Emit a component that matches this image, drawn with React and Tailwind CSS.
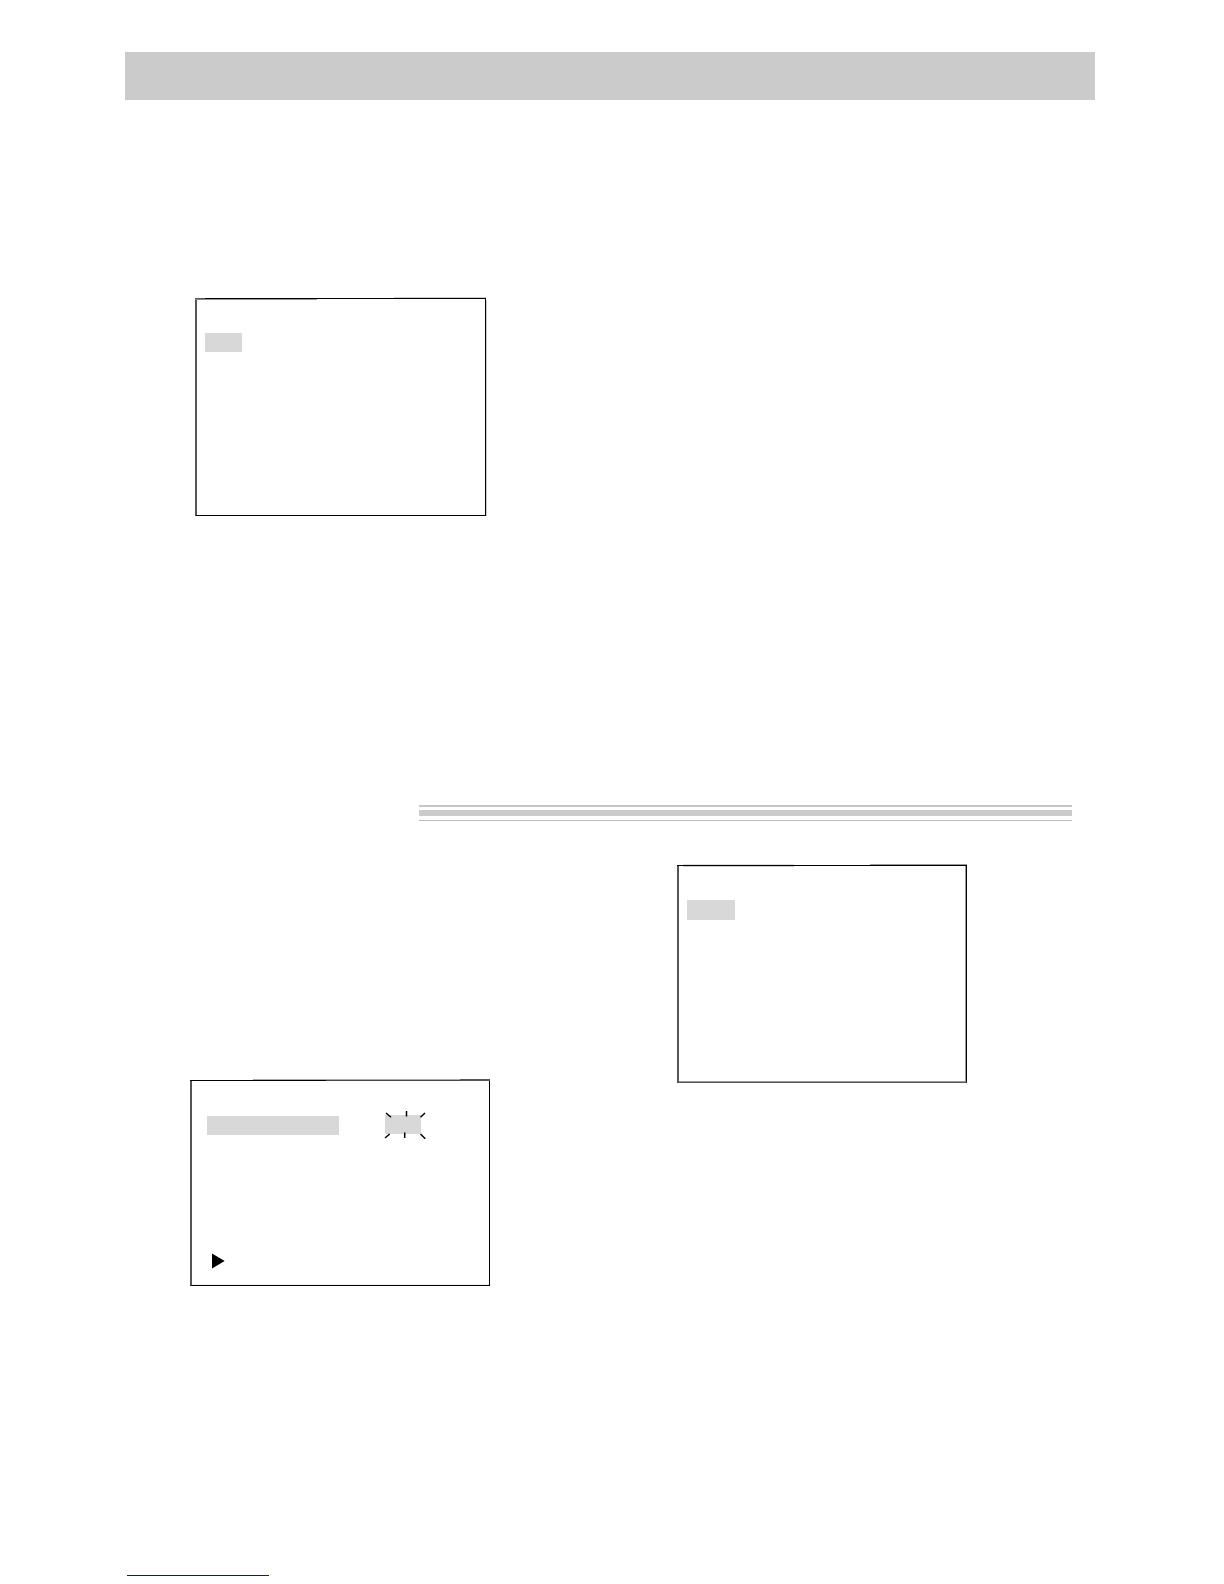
export default function App() {
  return (
    <main className="min-h-screen bg-white px-[125px] pt-[52px] pb-2">

      {/* TITLE BAR */}
      <header className="mr-1 h-12 bg-[#cbcbcb]" />

      {/* FIRST SCREEN */}
      <section className="mt-[197px] pl-[70px]">
        <Screen
          className="max-w-[291px]"
          edge={[
            { width: "w-[10px]", rows: ["bg-white", "bg-[#555555]", "bg-[#888888]"] },
            { width: "w-28", rows: ["bg-white", "bg-black", "bg-[#999999]"] },
            { width: "w-[77px]", rows: ["bg-white", "bg-black", "bg-white"] },
            { width: "flex-1", rows: ["bg-[#d0d0d0]", "bg-black", "bg-white"] },
            { width: "w-px", rows: ["bg-[#d0d0d0]", "bg-black", "bg-black"] },
          ]}
          body="h-[216px] border-l-[#555555] border-b-black pl-2 pt-[33px] shadow-[1px_0_0_#cccccc]"
        >
          <div className="h-[19px] w-[37px] bg-[#d8d8d8]" />
        </Screen>
      </section>

      {/* DIVIDER */}
      <div className="mt-[289px] mr-[27px] ml-[294px]">
        <div className="h-[2px] bg-[#c6c6c6]" />
        <div className="mt-[3px] h-[6px] bg-[#cbcbcb]" />
        <div className="mt-1 h-px bg-[#bdbdbd]" />
      </div>

      {/* SECOND AND THIRD SCREENS */}
      <section className="mt-[43px] grid grid-cols-2">

        <div className="pt-[215px] pl-[65px]">
          <Screen
            className="max-w-[300px]"
            edge={[
              { width: "w-[63px]", rows: ["bg-white", "bg-black"] },
              { width: "w-[73px]", rows: ["bg-[#aaaaaa]", "bg-black"] },
              { width: "w-[134px]", rows: ["bg-[#aaaaaa]", "bg-[#444444]"] },
              { width: "flex-1", rows: ["bg-[#555555]", "bg-[#555555]"] },
            ]}
            body="h-[205px] border-l-[#555555] border-b-black pl-[15px] pt-[34px] shadow-[inset_0_-1px_0_#eeeeee]"
          >
            <div className="flex items-start gap-[46px]">
              <div className="mt-px h-[19px] w-[132px] bg-[#d8d8d8]" />
              <div className="relative h-[19px] w-9 bg-[#d8d8d8]">
                <Rays />
              </div>
            </div>
            <svg viewBox="0 0 13 16" className="mt-[118px] ml-[5px] h-4 w-[13px]">
              <path d="M0 0.5L12.7 8L0 15.5Z" fill="#000000" />
            </svg>
          </Screen>
        </div>

        <div className="pl-[65px]">
          <Screen
            className="max-w-[290px]"
            edge={[
              { width: "w-[2px]", rows: ["bg-white", "bg-black", "bg-[#555555]"] },
              { width: "w-1", rows: ["bg-white", "bg-black", "bg-white"] },
              { width: "w-[111px]", rows: ["bg-[#dddddd]", "bg-black", "bg-[#cccccc]"] },
              { width: "w-[76px]", rows: ["bg-white", "bg-black", "bg-white"] },
              { width: "flex-1", rows: ["bg-[#999999]", "bg-black", "bg-white"] },
              { width: "w-px", rows: ["bg-[#999999]", "bg-black", "bg-[#999999]"] },
              { width: "w-px", rows: ["bg-[#999999]", "bg-black", "bg-black"] },
            ]}
            body="h-[216px] border-l-[#555555] border-b-[#555555] pl-2 pt-[33px] shadow-[inset_-1px_-1px_0_#999999]"
          >
            <div className="h-5 w-12 bg-[#d8d8d8]" />
          </Screen>
        </div>

      </section>

      {/* FOOTER RULE */}
      <footer className="mt-[289px] ml-[2px] h-px w-[142px] bg-[#14148c]" />

    </main>
  );
}

/* ---------------- SCREEN ---------------- */

function Screen({ className, edge, body, children }) {
  return (
    <div className={className}>
      <div className="flex">
        {edge.map((part, i) => (
          <div key={i} className={part.width}>
            {part.rows.map((row, j) => (
              <div key={j} className={`h-px ${row}`} />
            ))}
          </div>
        ))}
      </div>

      <div className={`border-r border-b border-l-2 border-r-black ${body}`}>
        {children}
      </div>
    </div>
  );
}

/* ---------------- RAYS ---------------- */

function Rays() {
  return (
    <svg
      viewBox="0 0 42 28"
      className="absolute -top-1 left-0 h-7 w-[42px] overflow-visible"
      fill="none"
      stroke="#000000"
      strokeWidth="1.5"
    >
      <path d="M1 2L6 6.2M21.5 0V5.5M40 2L35.5 6.2" />
      <path d="M0 27L4.7 23M19.7 21.5V27M35.5 23L40.3 27.7" />
    </svg>
  );
}
